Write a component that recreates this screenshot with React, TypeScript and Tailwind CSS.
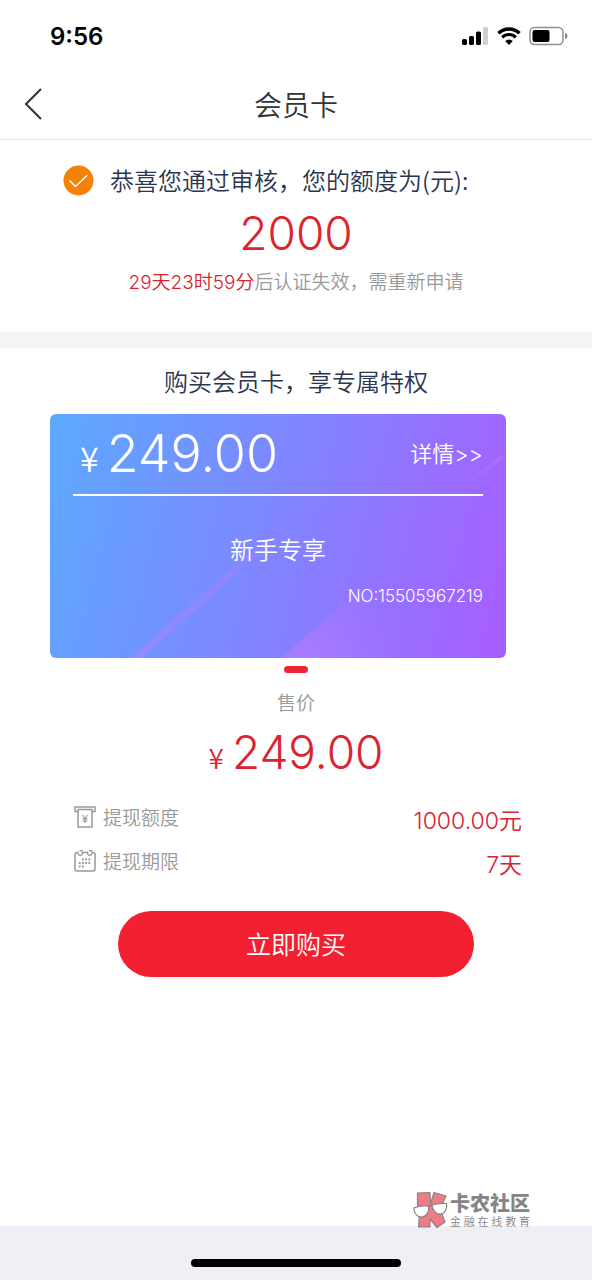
import type { ReactNode } from "react";

function StatusBar() {
  return (
    <div className="flex h-[72px] items-center justify-between pr-6 pl-[50px]">
      <time className="pt-px font-['Inter'] text-2xl font-semibold text-black">9:56</time>
      <div className="flex items-center gap-2">
        <svg width="27" height="18" viewBox="0 0 27 18" aria-hidden="true">
          <rect x="0" y="12" width="5" height="6" rx="1.5" fill="#000" />
          <rect x="7" y="9" width="5" height="9" rx="1.5" fill="#000" />
          <rect x="14" y="4.5" width="5" height="13.5" rx="1.5" fill="#000" />
          <rect x="21" y="0" width="5" height="18" rx="1.5" fill="#d0d0d0" />
        </svg>
        <svg width="24" height="18" viewBox="0 0 24 18" aria-hidden="true">
          <path d="M1.5 6.200a15.200 15.200 0 0 1 21 0" fill="none" stroke="#000" strokeWidth="3.6" />
          <path d="M5.200 10.300a9.800 9.800 0 0 1 13.600 0" fill="none" stroke="#000" strokeWidth="3" />
          <path d="M8.200 14.100a5.400 5.400 0 0 1 7.600 0L12 18z" fill="#000" />
        </svg>
        <svg width="39" height="20" viewBox="0 0 39 20" aria-hidden="true">
          <rect x="1" y="1.5" width="33" height="17" rx="4.5" fill="none" stroke="#8e8e8e" strokeWidth="1.5" />
          <rect x="3.500" y="4" width="17" height="12" rx="2" fill="#000" />
          <path d="M36 7c2 .6 2.500 1.800 2.500 3s-.5 2.400-2.500 3z" fill="#8e8e8e" />
        </svg>
      </div>
    </div>
  );
}

function CashIcon() {
  return (
    <svg width="22" height="22" viewBox="0 0 22 22" fill="none" stroke="#999" strokeWidth="1.5" aria-hidden="true">
      <path d="M4 5.500H1V1h20v4.500h-3M3.500 3.500h15" />
      <path d="M4 3.500V21h14V3.500" />
      <path d="m8.500 9 2.500 3.500L13.500 9M11 12.500V17M8.500 12.800h5M8.500 15h5" strokeWidth="1.2" />
    </svg>
  );
}

function CalendarIcon() {
  return (
    <svg width="22" height="22" viewBox="0 0 22 22" fill="none" stroke="#999" strokeWidth="1.5" aria-hidden="true">
      <path d="M3.500 2.500H3a2 2 0 0 0-2 2V19a2 2 0 0 0 2 2h16a2 2 0 0 0 2-2V4.500a2 2 0 0 0-2-2h-.5M9 2.500h4" />
      <path d="M4 1.500v1.600a2.200 2.200 0 0 0 4.400 0V1.500a1.200 1.200 0 0 0-2.400 0M13.600 1.500v1.600a2.200 2.200 0 0 0 4.400 0V1.500a1.200 1.200 0 0 0-2.400 0" strokeWidth="1.300" />
      <path d="M8 9.500h9M4.800 13h12.200M4.800 16.500h6" strokeWidth="1.800" strokeDasharray="1.800 1.400" />
    </svg>
  );
}

function DetailRow({ icon, label, value }: { icon: ReactNode; label: string; value: string }) {
  return (
    <div className="flex h-11 items-center justify-between">
      <dt className="flex items-center gap-[7px] text-[19px] text-[#999]">
        {icon}
        {label}
      </dt>
      <dd className="pt-2 font-['Inter','Noto_Sans_CJK_SC',sans-serif] text-[23px] text-[#d9222f]">{value}</dd>
    </div>
  );
}

function MemberCard() {
  return (
    <article className="relative mr-[86px] ml-[50px] h-[244px] overflow-hidden rounded-md bg-linear-[105deg,#5baaff,#7f86ff_48%,#a95dff] text-white">
      <svg className="absolute inset-0 size-full" viewBox="0 0 456 244" preserveAspectRatio="none" aria-hidden="true">
        <defs>
          <linearGradient id="streak" x1="0" y1="1" x2="1" y2="0">
            <stop offset="0" stopColor="#c77dff" stopOpacity="0.4" />
            <stop offset="1" stopColor="#c77dff" stopOpacity="0" />
          </linearGradient>
          <linearGradient id="glint" x1="0" y1="1" x2="1" y2="0">
            <stop offset="0" stopColor="#c77dff" stopOpacity="0" />
            <stop offset="1" stopColor="#c77dff" stopOpacity="0.35" />
          </linearGradient>
          <radialGradient id="facet" gradientUnits="userSpaceOnUse" cx="255" cy="244" r="120">
            <stop offset="0" stopColor="#d27dff" stopOpacity="0.45" />
            <stop offset="1" stopColor="#b070ff" stopOpacity="0" />
          </radialGradient>
        </defs>
        <path d="M81 244 190 146 285 72 283 80 195 152 92 244Z" fill="url(#streak)" />
        <path d="M410 72 450 42 456 43 418 72Z" fill="url(#glint)" />
        <path d="M231 244 345 146 456 190V244Z" fill="url(#facet)" />
      </svg>
      <div className="relative px-[23px]">
        <div className="flex h-[82px] items-center justify-between border-b-2 border-white pl-[7px]">
          <p className="flex items-baseline gap-2">
            <span className="text-[34px] leading-none">¥</span>
            <span className="font-['Inter'] text-[52px] leading-none font-light">249.00</span>
          </p>
          <a href="#details" className="font-['Inter','Noto_Sans_CJK_SC',sans-serif] text-[22px]">
            详情&gt;&gt;
          </a>
        </div>
        <h3 className="pt-[35px] text-center text-2xl leading-9">新手专享</h3>
        <p className="pt-[17px] text-right font-['Inter'] text-[17px] leading-6">NO:15505967219</p>
      </div>
    </article>
  );
}

function Watermark() {
  return (
    <div className="absolute right-[62px] bottom-[51px] flex items-center gap-[2px] font-['Inter','Noto_Sans_CJK_SC',sans-serif] text-[#858585]">
      <svg width="35" height="38" viewBox="0 0 35 38" stroke="#858585" strokeWidth="1.200" strokeLinejoin="round" aria-hidden="true">
        <path d="M4.500 2 17 1.500 17.500 13 21 1.500 33 5 27 18 32 31 24 36.500 17 28V36H5.500L6.500 24 4.500 14z" fill="#ee7b86" />
        <path d="M.8 17C5 15 10 14.500 15.500 15c1 5.500-1.500 10.500-6.500 11-4.700.4-7.500-3.500-8.200-9z" fill="#fff" />
        <path d="M19 14C23.500 12.500 28 12 33.500 12.500c1 5-1.500 10-6 10.500s-8-4-8.500-9z" fill="#fff" />
        <path d="M15.500 15.500q2-1.500 3.500-1" fill="none" />
      </svg>
      <p className="flex flex-col">
        <span className="text-xl leading-6 font-black">卡农社区</span>
        <span className="flex justify-between text-[11px] leading-[13px]">
          {["金", "融", "在", "线", "教", "育"].map((c) => (
            <span key={c}>{c}</span>
          ))}
        </span>
      </p>
    </div>
  );
}

export default function App() {
  return (
    <div className="relative flex min-h-screen flex-col bg-white font-['Noto_Sans_CJK_SC',sans-serif] font-[350]">
      <StatusBar />
      <header className="grid h-17 grid-cols-[68px_1fr_68px] items-center border-b border-[#e6e6e6] pb-1">
        <button type="button" aria-label="返回" className="flex h-full items-center pl-6">
          <svg width="18" height="32" viewBox="0 0 18 32" fill="none" stroke="#333" strokeWidth="2" aria-hidden="true">
            <path d="M17 1 2 16l15 15" />
          </svg>
        </button>
        <h1 className="text-center text-[28px] leading-10 text-[#333]">会员卡</h1>
      </header>

      <main className="flex flex-1 flex-col">
        <section className="flex h-48 flex-col pt-5 text-center">
          <div className="flex items-center gap-4 pl-[63px] text-2xl leading-10 text-[#2b3550]">
            <svg width="31" height="31" viewBox="0 0 31 31" aria-hidden="true">
              <circle cx="15.500" cy="15.500" r="15" fill="#f58206" />
              <path d="m6.500 15.500 6 6 12-11.500" fill="none" stroke="#fff" strokeWidth="1.600" />
            </svg>
            <h2>恭喜您通过审核，您的额度为(元):</h2>
          </div>
          <p className="pt-1 font-['Inter'] text-[46px] leading-[58px] text-[#dc2431]">2000</p>
          <p className="pt-[5px] font-['Inter','Noto_Sans_CJK_SC',sans-serif] text-[19px] leading-8 text-[#999]">
            <span className="text-[#d9222f]">29天23时59分</span>后认证失效，需重新申请
          </p>
        </section>

        <div className="h-4 bg-[#f4f4f4]" />

        <section className="flex flex-col">
          <h2 className="py-[13px] text-center text-2xl leading-10 text-[#2b3550]">购买会员卡，享专属特权</h2>
          <MemberCard />
          <div className="mt-2 h-[7px] w-6 self-center rounded-full bg-[#ec2435]" />
          <p className="pt-[13px] text-center text-[19px] leading-8 text-[#999]">售价</p>
          <p className="flex items-baseline justify-center gap-2 pt-1 text-[#dc2431]">
            <span className="text-[28px] leading-none">¥</span>
            <span className="font-['Inter'] text-[46px] leading-[60px]">249.00</span>
          </p>
          <dl className="pt-[13px] pr-[70px] pl-[74px]">
            <DetailRow icon={<CashIcon />} label="提现额度" value="1000.00元" />
            <DetailRow icon={<CalendarIcon />} label="提现期限" value="7天" />
          </dl>
          <button type="button" className="mx-[118px] mt-7 h-[66px] rounded-full bg-[#f32031] text-[25px] text-white">
            立即购买
          </button>
        </section>
      </main>

      <footer className="flex h-[54px] items-end justify-center bg-[#efeff5] pb-[13px]">
        <div className="h-2 w-[210px] rounded-full bg-black" />
      </footer>
      <Watermark />
    </div>
  );
}
